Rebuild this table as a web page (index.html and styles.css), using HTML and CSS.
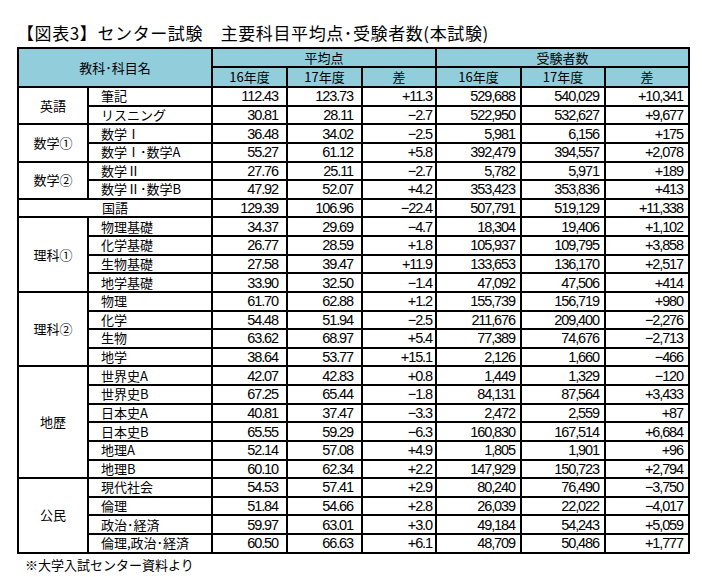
FILE: index.html
```html
<!DOCTYPE html>
<html lang="ja">
<head>
<meta charset="utf-8">
<title>センター試験 主要科目平均点・受験者数</title>
<link rel="stylesheet" href="styles.css">
</head>
<body>
<div class="page">
<h1 class="title">【図表3】センター試験　主要科目平均点･受験者数(本試験)</h1>
<table class="tbl">
<colgroup><col class="c-cat"><col class="c-sub"><col class="c-a"><col class="c-a"><col class="c-d"><col class="c-m"><col class="c-m2"><col class="c-m2"></colgroup>
<thead>
<tr class="h1"><th colspan="2" rowspan="2">教科･科目名</th><th colspan="3">平均点</th><th colspan="3">受験者数</th></tr>
<tr class="h2"><th>16年度</th><th>17年度</th><th>差</th><th>16年度</th><th>17年度</th><th>差</th></tr>
</thead>
<tbody>
<tr><td class="cat" rowspan="2">英語</td><td class="sub">筆記</td><td class="n a">112.43</td><td class="n a">123.73</td><td class="n d">+11.3</td><td class="n c">529,688</td><td class="n c">540,029</td><td class="n c">+10,341</td></tr>
<tr><td class="sub">リスニング</td><td class="n a">30.81</td><td class="n a">28.11</td><td class="n d">−2.7</td><td class="n c">522,950</td><td class="n c">532,627</td><td class="n c">+9,677</td></tr>
<tr><td class="cat" rowspan="2">数学①</td><td class="sub">数学Ⅰ</td><td class="n a">36.48</td><td class="n a">34.02</td><td class="n d">−2.5</td><td class="n c">5,981</td><td class="n c">6,156</td><td class="n c">+175</td></tr>
<tr><td class="sub">数学Ⅰ･数学A</td><td class="n a">55.27</td><td class="n a">61.12</td><td class="n d">+5.8</td><td class="n c">392,479</td><td class="n c">394,557</td><td class="n c">+2,078</td></tr>
<tr><td class="cat" rowspan="2">数学②</td><td class="sub">数学Ⅱ</td><td class="n a">27.76</td><td class="n a">25.11</td><td class="n d">−2.7</td><td class="n c">5,782</td><td class="n c">5,971</td><td class="n c">+189</td></tr>
<tr><td class="sub">数学Ⅱ･数学B</td><td class="n a">47.92</td><td class="n a">52.07</td><td class="n d">+4.2</td><td class="n c">353,423</td><td class="n c">353,836</td><td class="n c">+413</td></tr>
<tr><td class="sub wide" colspan="2">国語</td><td class="n a">129.39</td><td class="n a">106.96</td><td class="n d">−22.4</td><td class="n c">507,791</td><td class="n c">519,129</td><td class="n c">+11,338</td></tr>
<tr><td class="cat" rowspan="4">理科①</td><td class="sub">物理基礎</td><td class="n a">34.37</td><td class="n a">29.69</td><td class="n d">−4.7</td><td class="n c">18,304</td><td class="n c">19,406</td><td class="n c">+1,102</td></tr>
<tr><td class="sub">化学基礎</td><td class="n a">26.77</td><td class="n a">28.59</td><td class="n d">+1.8</td><td class="n c">105,937</td><td class="n c">109,795</td><td class="n c">+3,858</td></tr>
<tr><td class="sub">生物基礎</td><td class="n a">27.58</td><td class="n a">39.47</td><td class="n d">+11.9</td><td class="n c">133,653</td><td class="n c">136,170</td><td class="n c">+2,517</td></tr>
<tr><td class="sub">地学基礎</td><td class="n a">33.90</td><td class="n a">32.50</td><td class="n d">−1.4</td><td class="n c">47,092</td><td class="n c">47,506</td><td class="n c">+414</td></tr>
<tr><td class="cat" rowspan="4">理科②</td><td class="sub">物理</td><td class="n a">61.70</td><td class="n a">62.88</td><td class="n d">+1.2</td><td class="n c">155,739</td><td class="n c">156,719</td><td class="n c">+980</td></tr>
<tr><td class="sub">化学</td><td class="n a">54.48</td><td class="n a">51.94</td><td class="n d">−2.5</td><td class="n c">211,676</td><td class="n c">209,400</td><td class="n c">−2,276</td></tr>
<tr><td class="sub">生物</td><td class="n a">63.62</td><td class="n a">68.97</td><td class="n d">+5.4</td><td class="n c">77,389</td><td class="n c">74,676</td><td class="n c">−2,713</td></tr>
<tr><td class="sub">地学</td><td class="n a">38.64</td><td class="n a">53.77</td><td class="n d">+15.1</td><td class="n c">2,126</td><td class="n c">1,660</td><td class="n c">−466</td></tr>
<tr><td class="cat" rowspan="6">地歴</td><td class="sub">世界史A</td><td class="n a">42.07</td><td class="n a">42.83</td><td class="n d">+0.8</td><td class="n c">1,449</td><td class="n c">1,329</td><td class="n c">−120</td></tr>
<tr><td class="sub">世界史B</td><td class="n a">67.25</td><td class="n a">65.44</td><td class="n d">−1.8</td><td class="n c">84,131</td><td class="n c">87,564</td><td class="n c">+3,433</td></tr>
<tr><td class="sub">日本史A</td><td class="n a">40.81</td><td class="n a">37.47</td><td class="n d">−3.3</td><td class="n c">2,472</td><td class="n c">2,559</td><td class="n c">+87</td></tr>
<tr><td class="sub">日本史B</td><td class="n a">65.55</td><td class="n a">59.29</td><td class="n d">−6.3</td><td class="n c">160,830</td><td class="n c">167,514</td><td class="n c">+6,684</td></tr>
<tr><td class="sub">地理A</td><td class="n a">52.14</td><td class="n a">57.08</td><td class="n d">+4.9</td><td class="n c">1,805</td><td class="n c">1,901</td><td class="n c">+96</td></tr>
<tr><td class="sub">地理B</td><td class="n a">60.10</td><td class="n a">62.34</td><td class="n d">+2.2</td><td class="n c">147,929</td><td class="n c">150,723</td><td class="n c">+2,794</td></tr>
<tr><td class="cat" rowspan="4">公民</td><td class="sub">現代社会</td><td class="n a">54.53</td><td class="n a">57.41</td><td class="n d">+2.9</td><td class="n c">80,240</td><td class="n c">76,490</td><td class="n c">−3,750</td></tr>
<tr><td class="sub">倫理</td><td class="n a">51.84</td><td class="n a">54.66</td><td class="n d">+2.8</td><td class="n c">26,039</td><td class="n c">22,022</td><td class="n c">−4,017</td></tr>
<tr><td class="sub">政治･経済</td><td class="n a">59.97</td><td class="n a">63.01</td><td class="n d">+3.0</td><td class="n c">49,184</td><td class="n c">54,243</td><td class="n c">+5,059</td></tr>
<tr><td class="sub">倫理,政治･経済</td><td class="n a">60.50</td><td class="n a">66.63</td><td class="n d">+6.1</td><td class="n c">48,709</td><td class="n c">50,486</td><td class="n c">+1,777</td></tr>
</tbody>
</table>
<p class="note">※大学入試センター資料より</p>
</div>
</body>
</html>
```

FILE: styles.css
```css
html, body {
  margin: 0;
  padding: 0;
  background: #fff;
}

body {
  font-family: "Noto Sans CJK JP", "Noto Sans", sans-serif;
  color: #000;
}

.page {
  padding: 23px 0 0 17px;
}

.title {
  margin: 0 0 5px 0;
  font-size: 17px;
  font-weight: 400;
  line-height: 19px;
  letter-spacing: 0.6px;
}

.tbl {
  border-collapse: collapse;
  table-layout: fixed;
  width: 673px;
}

.c-cat { width: 70px; }
.c-sub { width: 124px; }
.c-a { width: 75px; }
.c-d { width: 74px; }
.c-m { width: 85px; }
.c-m2 { width: 84px; }

.tbl th,
.tbl td {
  border: 2px solid #000;
  padding: 0;
  font-size: 13px;
  line-height: 14px;
  white-space: nowrap;
  overflow: hidden;
  vertical-align: middle;
}

.tbl th {
  background: #92cddc;
  font-weight: 400;
  text-align: center;
}

.h1 { height: 19px; }
.h2 { height: 20px; }

.tbl tbody tr { height: 18.64px; }

.cat {
  text-align: center;
}

.sub {
  text-align: left;
  padding-left: 12px !important;
}

.sub.wide {
  padding-left: 83px !important;
}

.n {
  text-align: right;
  font-family: "Liberation Sans", Arial, sans-serif;
  font-size: 14.5px !important;
  letter-spacing: -1.1px;
}

.n.a { padding-right: 8px !important; }
.n.d { padding-right: 3px !important; }
.n.c { padding-right: 5px !important; }

.note {
  margin: 3px 0 0 8px;
  font-size: 13px;
  line-height: 16px;
}
```
